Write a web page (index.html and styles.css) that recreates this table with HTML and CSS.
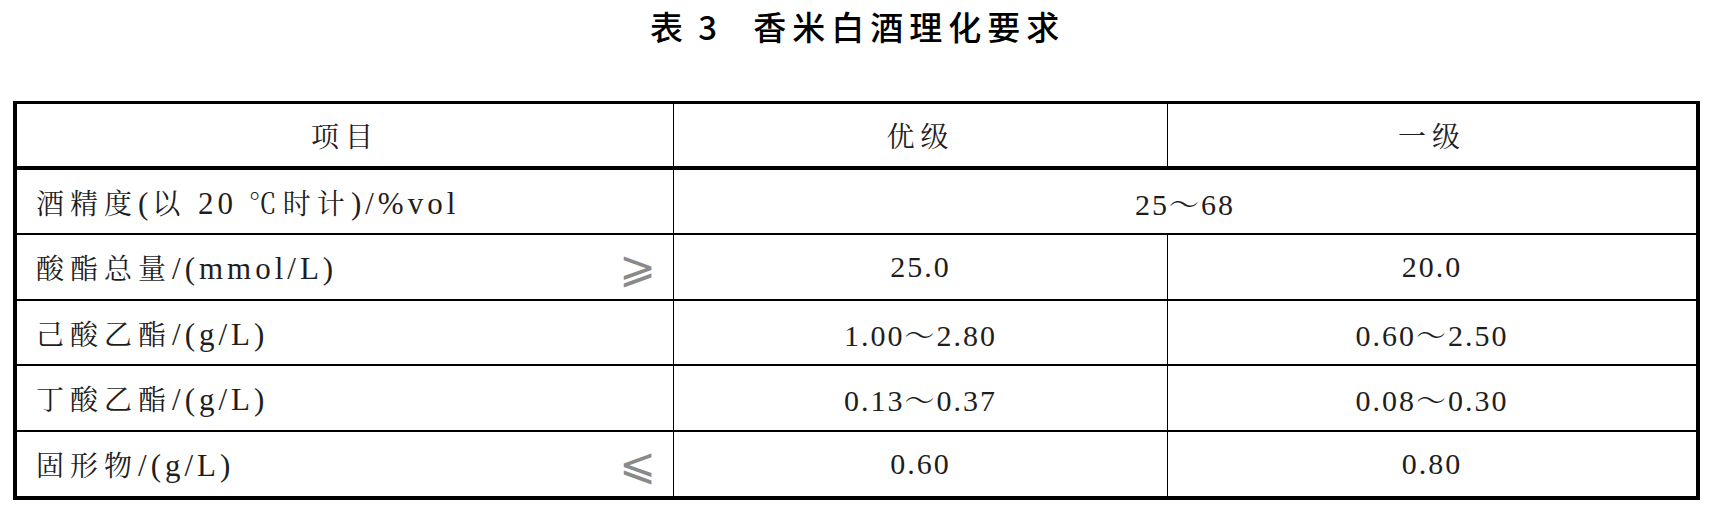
FILE: index.html
```html
<!DOCTYPE html>
<html lang="zh-CN">
<head>
<meta charset="utf-8">
<title>表 3 香米白酒理化要求</title>
<link rel="stylesheet" href="styles.css">
</head>
<body>
<h1 class="title"><span class="title-no">表 3</span><span class="title-name">香米白酒理化要求</span></h1>
<div class="spec">
  <div class="cell head">项目</div>
  <div class="cell head">优级</div>
  <div class="cell head last">一级</div>

  <div class="cell label"><span>酒精度<span class="lat">(</span>以<span class="lat"> 20 </span>℃时计<span class="lat">)/%vol</span></span></div>
  <div class="cell num wide last">25～68</div>

  <div class="cell label"><span>酸酯总量<span class="lat">/(mmol/L)</span></span><span class="cmp">⩾</span></div>
  <div class="cell num">25.0</div>
  <div class="cell num last">20.0</div>

  <div class="cell label"><span>己酸乙酯<span class="lat">/(g/L)</span></span></div>
  <div class="cell num">1.00～2.80</div>
  <div class="cell num last">0.60～2.50</div>

  <div class="cell label"><span>丁酸乙酯<span class="lat">/(g/L)</span></span></div>
  <div class="cell num">0.13～0.37</div>
  <div class="cell num last">0.08～0.30</div>

  <div class="cell label end"><span>固形物<span class="lat">/(g/L)</span></span><span class="cmp">⩽</span></div>
  <div class="cell num end">0.60</div>
  <div class="cell num end last">0.80</div>
</div>
</body>
</html>
```

FILE: styles.css
```css
html, body {
  margin: 0;
  padding: 0;
  background: #fff;
}

body {
  width: 1715px;
  color: #1e1e1e;
}

.title {
  margin: 0;
  padding-top: 6px;
  height: 40px;
  margin-bottom: 55px;
  display: flex;
  justify-content: center;
  gap: 30px;
  font-family: "Noto Sans CJK SC", "Noto Sans", sans-serif;
  font-size: 33px;
  font-weight: 500;
  line-height: 40px;
  color: #000;
  letter-spacing: 6px;
}

.title-no {
  word-spacing: -4px;
}

.spec {
  margin-left: 13px;
  width: 1687px;
  box-sizing: border-box;
  border: 4px solid #000;
  border-top-width: 3px;
  display: grid;
  grid-template-columns: 657px 494px 1fr;
  grid-template-rows: 66px 65px 66px 65px 66px 64px;
  font-family: "Liberation Serif", "Noto Serif CJK SC", "Noto Sans CJK SC", serif;
  font-size: 28px;
  letter-spacing: 6px;
}

.cell {
  box-sizing: border-box;
  border-right: 1px solid #000;
  border-bottom: 2px solid #000;
  display: flex;
  align-items: center;
  justify-content: center;
  white-space: nowrap;
}

.cell.last {
  border-right: none;
}

.cell.end {
  border-bottom: none;
}

.cell.head {
  border-bottom-width: 4px;
}

.cell.label {
  justify-content: space-between;
  padding-left: 19px;
  padding-right: 18px;
}

.lat {
  font-size: 31px;
  letter-spacing: 4px;
}

.cell.num {
  font-size: 30px;
  letter-spacing: 2px;
}

.cell.wide {
  grid-column: span 2;
}

.cmp {
  font-family: "DejaVu Sans", sans-serif;
  font-size: 44px;
  line-height: 1;
  letter-spacing: 0;
  font-weight: 400;
  color: #8a8a8a;
  margin-right: -1px;
}
```
